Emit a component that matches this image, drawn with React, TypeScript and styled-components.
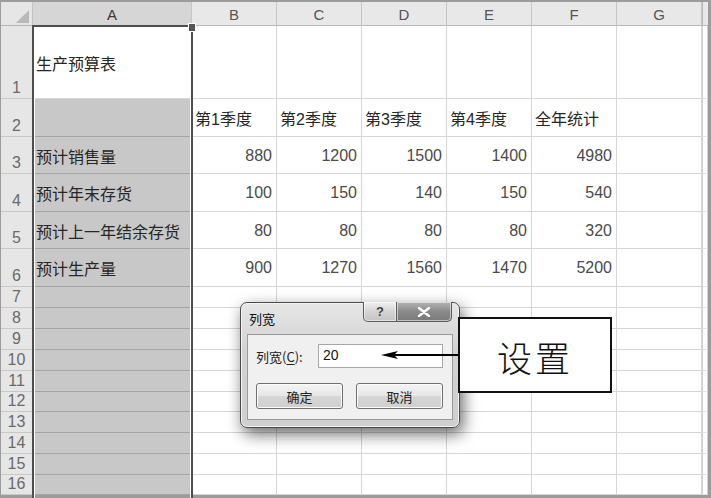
import { createGlobalStyle, styled } from "styled-components";

const GlobalStyle = createGlobalStyle`
  html, body {
    margin: 0;
    padding: 0;
    background: #fff;
  }
  body {
    font-family: "Liberation Sans", "Noto Sans CJK SC", sans-serif;
  }
`;

const COLS = ["A", "B", "C", "D", "E", "F", "G"];
const ROW_HEIGHTS = [73, 38, 37, 38, 37, 38, 21, 21, 21, 21, 21, 20, 21, 21, 21, 20];

// sheet content, row by row (A..G)
const SHEET: (string | number | null)[][] = [
  ["生产预算表", null, null, null, null, null, null],
  [null, "第1季度", "第2季度", "第3季度", "第4季度", "全年统计", null],
  ["预计销售量", 880, 1200, 1500, 1400, 4980, null],
  ["预计年末存货", 100, 150, 140, 150, 540, null],
  ["预计上一年结余存货", 80, 80, 80, 80, 320, null],
  ["预计生产量", 900, 1270, 1560, 1470, 5200, null],
];

export default function App() {
  return (
    <>
      <GlobalStyle />
      <Frame>
        <Sheet>
          <Corner>
            <svg width="31" height="23" viewBox="0 0 31 23">
              <polygon points="15,21 28,21 28,8" fill="#b9b9b9" />
            </svg>
          </Corner>
          {COLS.map((c) => (
            <ColHeader key={c} $selected={c === "A"}>
              {c}
            </ColHeader>
          ))}
          <EdgeHeader />

          {ROW_HEIGHTS.map((_, r) => {
            const row = SHEET[r] || [];
            return [
              <RowHeader key={`h${r}`}>{r + 1}</RowHeader>,
              ...COLS.map((c, ci) => {
                const v = row[ci];
                const isNum = typeof v === "number";
                return (
                  <Cell
                    key={`${r}-${c}`}
                    $selected={ci === 0 && r > 0}
                    $numeric={isNum}
                  >
                    {v ?? ""}
                  </Cell>
                );
              }),
              <EdgeCell key={`e${r}`} />,
            ];
          })}
        </Sheet>

        <Selection />
        <FillHandle />

        <Dialog>
          <TitleBar>
            <Title>列宽</Title>
            <Caption>
              <CaptionButton $kind="help">?</CaptionButton>
              <CaptionButton $kind="close">
                <svg width="14" height="10" viewBox="0 0 14 10">
                  <path d="M2 1 L12 9 M12 1 L2 9" stroke="#fff" strokeWidth="2.4" strokeLinecap="round" />
                </svg>
              </CaptionButton>
            </Caption>
          </TitleBar>
          <DialogBody>
            <FieldRow>
              <Label>
                列宽(<u>C</u>):
              </Label>
              <Input>20</Input>
            </FieldRow>
            <ButtonRow>
              <DialogButton>确定</DialogButton>
              <DialogButton>取消</DialogButton>
            </ButtonRow>
          </DialogBody>
        </Dialog>

        <Arrow width="80" height="16" viewBox="0 0 80 16">
          <line x1="14" y1="8" x2="80" y2="8" stroke="#000" strokeWidth="2" />
          <polygon points="1,8 18,4 14,8 18,12" fill="#000" />
        </Arrow>

        <Callout>设置</Callout>
      </Frame>
    </>
  );
}

const Frame = styled.div`
  position: relative;
  width: 711px;
  height: 498px;
  box-sizing: border-box;
  padding: 2px 3px 3px 1px;
  background: #9c9c9c;
  overflow: hidden;
`;

const Sheet = styled.div`
  display: grid;
  grid-template-columns: 32px 159px repeat(6, 85px) 6px;
  grid-template-rows: 24px ${ROW_HEIGHTS.map((h) => `${h}px`).join(" ")};
  background: #fff;
  height: 493px;
  overflow: hidden;
`;

const Corner = styled.div`
  background: #e6e6e6;
  border-right: 1px solid #c4c4c4;
  border-bottom: 1px solid #b4b4b4;
  box-sizing: border-box;
  svg {
    display: block;
  }
`;

const ColHeader = styled.div<{ $selected?: boolean }>`
  display: flex;
  align-items: center;
  justify-content: center;
  box-sizing: border-box;
  background: ${(p) => (p.$selected ? "#d6d6d6" : "#e8e8e8")};
  border-right: 1px solid #c6c6c6;
  border-bottom: 1px solid ${(p) => (p.$selected ? "#6a6a6a" : "#b8b8b8")};
  color: ${(p) => (p.$selected ? "#3a3a3a" : "#555")};
  font-size: 15px;
  padding-top: 2px;
`;

const EdgeHeader = styled.div`
  background: #e8e8e8;
  border-left: 1px solid #b8b8b8;
  border-bottom: 1px solid #b8b8b8;
  box-sizing: border-box;
`;

const RowHeader = styled.div`
  display: flex;
  align-items: flex-end;
  justify-content: center;
  box-sizing: border-box;
  background: #e6e6e6;
  border-right: 1px solid #b0b0b0;
  border-bottom: 1px solid #c8c8c8;
  color: #6a6a6a;
  font-size: 16px;
  line-height: 18px;
  padding-bottom: 1px;
`;

const Cell = styled.div<{ $selected?: boolean; $numeric?: boolean }>`
  display: flex;
  align-items: center;
  justify-content: ${(p) => (p.$numeric ? "flex-end" : "flex-start")};
  box-sizing: border-box;
  padding: 1px 4px 0 3px;
  background: ${(p) => (p.$selected ? "#c8c8c8" : "#fff")};
  border-right: 1px solid #d6d6d6;
  border-bottom: 1px solid ${(p) => (p.$selected ? "#a4a4a4" : "#d6d6d6")};
  color: ${(p) => (p.$numeric ? "#4a4a4a" : "#262626")};
  font-family: "Liberation Sans", "Noto Sans CJK SC", sans-serif;
  font-size: 16px;
  white-space: nowrap;
  overflow: hidden;
`;

const EdgeCell = styled.div`
  background: #fff;
  border-left: 1px solid #cfcfcf;
  border-right: 1px solid #cfcfcf;
  border-bottom: 1px solid #e4e4e4;
  box-sizing: border-box;
`;

const Selection = styled.div`
  position: absolute;
  left: 32px;
  top: 25px;
  width: 161px;
  height: 480px;
  box-sizing: border-box;
  border: 2px solid #4e4e4e;
  box-shadow: inset 0 0 0 1px #fff;
  pointer-events: none;
`;

const FillHandle = styled.div`
  position: absolute;
  left: 188px;
  top: 23px;
  width: 6px;
  height: 7px;
  background: #555;
  border: 1px solid #fff;
`;

const Dialog = styled.div`
  position: absolute;
  left: 240px;
  top: 302px;
  width: 220px;
  height: 126px;
  box-sizing: border-box;
  border: 1px solid #4a4a4a;
  border-radius: 7px;
  background: linear-gradient(#e6e6e6, #d2d2d2 40%, #cfcfcf);
  box-shadow: inset 0 0 0 1px #f4f4f4, 3px 6px 16px rgba(0, 0, 0, 0.6);
  display: flex;
  flex-direction: column;
  padding: 0 6px 7px 6px;
`;

const TitleBar = styled.div`
  display: flex;
  justify-content: space-between;
  height: 30px;
`;

const Title = styled.div`
  font-family: "Noto Sans CJK SC", sans-serif;
  font-size: 13px;
  color: #111;
  padding: 6px 0 0 2px;
`;

const Caption = styled.div`
  display: flex;
  align-self: flex-start;
  margin-top: -1px;
  margin-right: 1px;
`;

const CaptionButton = styled.div<{ $kind: "help" | "close" }>`
  display: flex;
  align-items: center;
  justify-content: center;
  box-sizing: border-box;
  height: 20px;
  width: ${(p) => (p.$kind === "help" ? "34px" : "55px")};
  border: 1px solid #5a5a5a;
  border-top: none;
  border-left-width: ${(p) => (p.$kind === "close" ? "0" : "1px")};
  border-radius: ${(p) => (p.$kind === "help" ? "0 0 0 5px" : "0 0 5px 0")};
  background: ${(p) =>
    p.$kind === "help"
      ? "linear-gradient(#f0f0f0, #d4d4d4 50%, #c4c4c4)"
      : "linear-gradient(#b4b4b4, #8a8a8a 50%, #7a7a7a)"};
  box-shadow: inset 0 0 0 1px rgba(255, 255, 255, 0.55);
  color: #444;
  font-family: "Liberation Sans", sans-serif;
  font-size: 13px;
  font-weight: bold;
`;

const DialogBody = styled.div`
  flex: 1;
  margin-top: 1px;
  background: #f0f0f0;
  border: 1px solid #9a9a9a;
  display: flex;
  flex-direction: column;
  padding: 9px 9px 0 8px;
  gap: 15px;
`;

const FieldRow = styled.div`
  display: flex;
  align-items: center;
  justify-content: space-between;
`;

const Label = styled.div`
  font-family: "Noto Sans CJK SC", sans-serif;
  font-size: 13px;
  color: #222;
  u {
    text-underline-offset: 2px;
  }
`;

const Input = styled.div`
  box-sizing: border-box;
  width: 125px;
  height: 24px;
  background: #fff;
  border: 1px solid #a6a6a6;
  padding: 2px 4px;
  font-family: "Liberation Sans", sans-serif;
  font-size: 14px;
  color: #111;
`;

const ButtonRow = styled.div`
  display: flex;
  justify-content: space-between;
`;

const DialogButton = styled.div`
  display: flex;
  align-items: center;
  justify-content: center;
  box-sizing: border-box;
  width: 87px;
  height: 26px;
  border: 1px solid #707070;
  border-radius: 3px;
  background: linear-gradient(#f4f4f4, #e6e6e6 48%, #d6d6d6 52%, #cfcfcf);
  box-shadow: inset 0 0 0 1px #fbfbfb;
  font-family: "Noto Sans CJK SC", sans-serif;
  font-size: 13px;
  color: #222;
`;

const Arrow = styled.svg`
  position: absolute;
  left: 380px;
  top: 347px;
`;

const Callout = styled.div`
  position: absolute;
  left: 458px;
  top: 317px;
  width: 154px;
  height: 76px;
  box-sizing: border-box;
  border: 2px solid #111;
  background: #fff;
  display: flex;
  align-items: center;
  justify-content: center;
  font-family: "Noto Sans CJK SC", sans-serif;
  font-weight: 300;
  font-size: 35px;
  letter-spacing: 3px;
  color: #111;
  padding-top: 2px;
`;
